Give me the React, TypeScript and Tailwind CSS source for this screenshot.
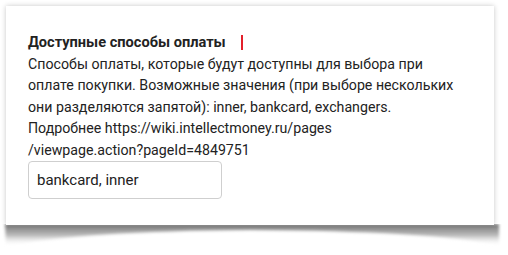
export default function App() {
    return (
        <div className="relative h-[255px] w-[508px] bg-white font-['Roboto',sans-serif] text-[#222]">
            {/* curled paper shadow under the card */}
            <svg className="absolute left-0 top-[224px]" width="508" height="31" viewBox="0 0 508 31">
                <defs>
                    <linearGradient id="sh" x1="0" y1="0" x2="0" y2="1">
                        <stop offset="0" stopColor="#777" />
                        <stop offset="0.5" stopColor="#b8b8b8" />
                        <stop offset="1" stopColor="#ffffff" stopOpacity="0" />
                    </linearGradient>
                    <filter id="bl" x="-5%" y="-50%" width="110%" height="200%">
                        <feGaussianBlur stdDeviation="1.4" />
                    </filter>
                </defs>
                <path
                    d="M5 0 H499 L499 21 Q430 7 250 6 Q80 7 6 22 Z"
                    fill="url(#sh)"
                    filter="url(#bl)"
                />
            </svg>

            <div className="relative left-[6px] top-[6px] h-[219px] w-[488px] bg-white px-[22px] pt-[26px] shadow-[0_0_5px_rgba(0,0,0,0.22)]">
                <div className="flex h-[21.5px] items-center text-[14.6px] font-bold leading-[21.5px]">
                    <span>Доступные способы оплаты</span>
                    <span className="ml-[15px] inline-block h-[15px] w-[2px] bg-[#e3202b]" />
                </div>
                <p className="w-[442px] text-[14.2px] leading-[21.5px] text-[#222]">
                    Способы оплаты, которые будут доступны для выбора при оплате покупки.
                    Возможные значения (при выборе нескольких они разделяются запятой): inner,
                    bankcard, exchangers.
                    <br />
                    Подробнее https://wiki.intellectmoney.ru/pages
                    <br />
                    /viewpage.action?pageId=4849751
                </p>
                <input
                    readOnly
                    value="bankcard, inner"
                    className="h-[38px] w-[194px] rounded-[4px] border border-[#cfcfcf] px-[8px] text-[15px] text-[#222] outline-none"
                />
            </div>
        </div>
    );
}
